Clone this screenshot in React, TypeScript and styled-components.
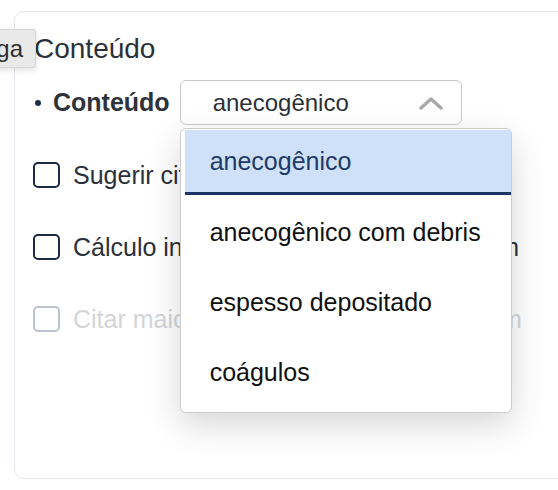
import styled, { createGlobalStyle } from 'styled-components';

const GlobalStyle = createGlobalStyle`
  html, body {
    margin: 0;
    padding: 0;
    background: #fff;
    overflow: hidden;
  }
  body {
    font-family: "Liberation Sans", Arial, Helvetica, sans-serif;
    color: #2b3139;
  }
`;

const Page = styled.div`
  position: relative;
  width: 558px;
  height: 490px;
  padding: 11px 0 0 14px;
  box-sizing: border-box;
  overflow: hidden;
`;

const Card = styled.div`
  width: 620px;
  height: 468px;
  box-sizing: border-box;
  border: 1.5px solid #e3e7ee;
  border-radius: 10px;
  padding: 20px 0 0 18px;
`;

const Title = styled.h2`
  margin: 0 0 14px 1px;
  font-size: 28px;
  font-weight: 400;
  line-height: 34px;
  color: #2b3139;
`;

const FieldRow = styled.div`
  display: flex;
  align-items: center;
  height: 45px;
  margin-bottom: 37px;
`;

const Bullet = styled.span`
  width: 6px;
  height: 6px;
  border-radius: 50%;
  background: #1f2d4d;
  margin: 0 12px 0 2px;
`;

const FieldLabel = styled.span`
  font-size: 25px;
  font-weight: 700;
  color: #2d3339;
  margin-right: 10px;
`;

const SelectWrap = styled.div`
  position: relative;
`;

const SelectBox = styled.div`
  width: 282px;
  height: 45px;
  box-sizing: border-box;
  border: 1.5px solid #c9c9c9;
  border-radius: 6px;
  display: flex;
  align-items: center;
  justify-content: space-between;
  padding: 0 18px 0 32px;
  font-size: 24px;
  color: #2b3139;
`;

const Menu = styled.div`
  position: absolute;
  top: 48px;
  left: 0;
  width: 332px;
  height: 285px;
  box-sizing: border-box;
  background: #fff;
  border: 1.5px solid #cccccc;
  border-radius: 6px;
  box-shadow: 0 12px 34px rgba(0, 0, 0, 0.16);
  padding: 1px 0 0 4px;
  z-index: 5;
`;

const Option = styled.div<{ $active?: boolean }>`
  height: ${(p) => (p.$active ? '62px' : '70px')};
  display: flex;
  align-items: center;
  padding-left: 25px;
  padding-top: ${(p) => (p.$active ? '0' : '4px')};
  box-sizing: content-box;
  font-size: 25px;
  color: ${(p) => (p.$active ? '#1f3a66' : '#111')};
  background: ${(p) => (p.$active ? '#cfe1f8' : 'transparent')};
  border-bottom: ${(p) => (p.$active ? '3px solid #1d3566' : 'none')};
  &:not(:first-child) {
    height: 66px;
  }
`;

const CheckList = styled.div`
  display: flex;
  flex-direction: column;
  gap: 46px;
`;

const CheckRow = styled.label<{ $disabled?: boolean }>`
  display: flex;
  align-items: center;
  gap: 13px;
  height: 26px;
  font-size: 25px;
  white-space: nowrap;
  color: ${(p) => (p.$disabled ? '#d3d5d8' : '#2b3139')};
`;

const Box = styled.span<{ $disabled?: boolean }>`
  width: 27px;
  height: 26px;
  box-sizing: border-box;
  border: 2px solid ${(p) => (p.$disabled ? '#bcc3cf' : '#1c2a48')};
  border-radius: 5px;
  flex-shrink: 0;
`;

const Tooltip = styled.div`
  position: absolute;
  top: 29px;
  right: 522px;
  height: 39px;
  box-sizing: border-box;
  padding: 0 12px 0 10px;
  display: flex;
  align-items: center;
  background: #e9e9e9;
  border: 1px solid #d6d6d6;
  border-radius: 3px;
  box-shadow: 0 2px 6px rgba(0, 0, 0, 0.12);
  font-size: 24px;
  color: #2f2f2f;
  white-space: nowrap;
`;

const options = ['anecogênico', 'anecogênico com debris', 'espesso depositado', 'coágulos'];

const checks = [
  { text: 'Sugerir citação no laudo', disabled: false },
  { text: 'Cálculo interno do volume médio em cm', disabled: false },
  { text: 'Citar maior dimensão do coágulo em cm', disabled: true },
];

export default function App() {
  return (
    <Page>
      <GlobalStyle />
      <Card>
        <Title>Conteúdo</Title>
        <FieldRow>
          <Bullet />
          <FieldLabel>Conteúdo</FieldLabel>
          <SelectWrap>
            <SelectBox>
              <span>anecogênico</span>
              <svg width="24" height="14" viewBox="0 0 24 14" fill="none">
                <path d="M2 12 L12 3 L22 12" stroke="#a9a9a9" strokeWidth="3.4" strokeLinecap="round" strokeLinejoin="round" />
              </svg>
            </SelectBox>
            <Menu>
              {options.map((o, i) => (
                <Option key={o} $active={i === 0}>
                  {o}
                </Option>
              ))}
            </Menu>
          </SelectWrap>
        </FieldRow>
        <CheckList>
          {checks.map((c) => (
            <CheckRow key={c.text} $disabled={c.disabled}>
              <Box $disabled={c.disabled} />
              {c.text}
            </CheckRow>
          ))}
        </CheckList>
      </Card>
      <Tooltip>Carga</Tooltip>
    </Page>
  );
}
